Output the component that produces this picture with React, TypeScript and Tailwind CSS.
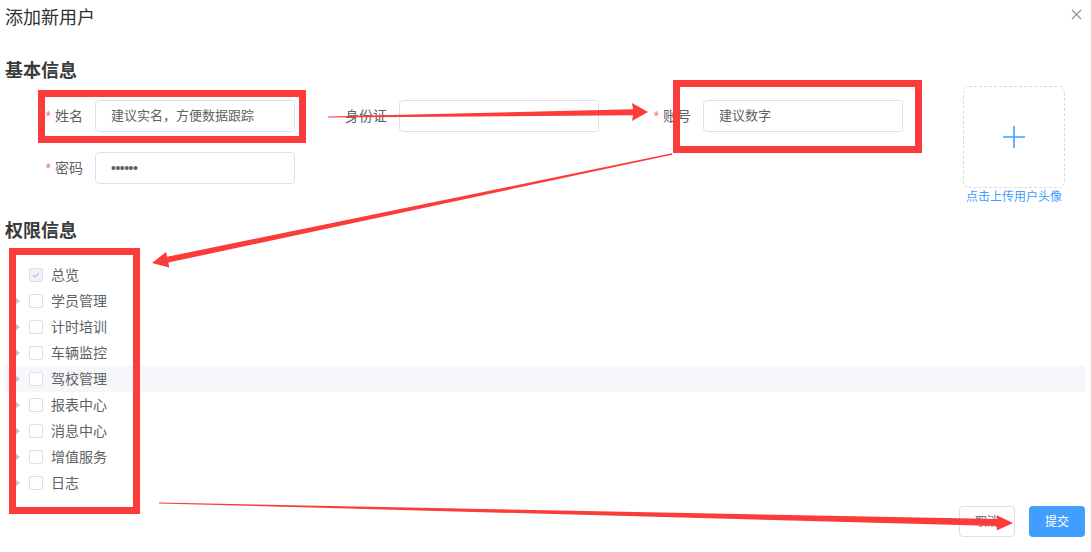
import React from "react";

const tree = [
  { label: "总览", leaf: true, checked: true },
  { label: "学员管理" },
  { label: "计时培训" },
  { label: "车辆监控" },
  { label: "驾校管理", hover: true },
  { label: "报表中心" },
  { label: "消息中心" },
  { label: "增值服务" },
  { label: "日志" },
];

function Field({
  label,
  required,
  value,
  mono,
}: {
  label: string;
  required?: boolean;
  value?: string;
  mono?: boolean;
}) {
  return (
    <div className="flex items-center">
      <label className="w-[90px] pr-3 text-right text-sm leading-8 text-[#606266]">
        {required && <span className="mr-1 text-[#f56c6c]">*</span>}
        {label}
      </label>
      <div
        className={
          "flex h-8 w-[200px] items-center rounded-[4px] border border-[#dcdfe6] px-[15px] text-[#606266] " +
          (mono ? "text-sm tracking-[-0.5px]" : "text-[13px]")
        }
      >
        {value}
      </div>
    </div>
  );
}

function Checkbox({ checked }: { checked?: boolean }) {
  if (checked) {
    return (
      <span className="flex h-[14px] w-[14px] items-center justify-center rounded-[2px] border border-[#dcdfe6] bg-[#edf2fc]">
        <svg width="8" height="6" viewBox="0 0 8 6" fill="none">
          <path d="M1 3l2 2 4-4" stroke="#c0c4cc" strokeWidth="1.2" />
        </svg>
      </span>
    );
  }
  return <span className="h-[14px] w-[14px] rounded-[2px] border border-[#dcdfe6] bg-white" />;
}

function Arrows() {
  return (
    <svg className="pointer-events-none absolute left-0 top-0" width="1091" height="552">
      <g fill="#fc3b3b">
        <polygon points="328,116.6 633,109.3 632,103 648,112 632,121 633,115.3 328,117.4" />
        <polygon points="672,153.3 167.1,256.8 166.1,251.9 152,263 169.3,267.5 168.3,262.6 672,154.7" />
        <polygon points="159,502.6 997.1,519.1 997.2,515.6 1013,523 996.8,530.6 996.9,526.1 159,503.4" />
      </g>
    </svg>
  );
}

export default function App() {
  return (
    <div className="relative h-[552px] w-[1091px] overflow-hidden bg-white pl-[5px] pr-[6px] font-['Liberation_Sans','Noto_Sans_CJK_SC',sans-serif]">
      <div className="flex h-9 items-center justify-between">
        <h1 className="text-lg text-[#303133]">添加新用户</h1>
        <span className="-mt-2 mr-[3px] text-[#909399]">
          <svg width="11" height="11" viewBox="0 0 11 11">
            <path d="M1 1l9 9M10 1l-9 9" stroke="#909399" strokeWidth="1.2" />
          </svg>
        </span>
      </div>

      <h2 className="mt-[23px] text-lg font-bold leading-6 text-[#3a3a3a]">基本信息</h2>

      <div className="mt-[3px] flex">
        <div className="flex flex-col gap-5 pt-[14px]">
          <div className="flex gap-[14px]">
            <Field label="姓名" required value="建议实名，方便数据跟踪" />
            <Field label="身份证" />
            <Field label="账号" required value="建议数字" />
          </div>
          <Field label="密码" required value="••••••" mono />
        </div>
        <div className="ml-auto mr-5 flex flex-col items-center">
          <div className="flex h-[102px] w-[102px] items-center justify-center rounded-md border border-dashed border-[#d9d9d9]">
            <svg width="24" height="24" viewBox="0 0 24 24">
              <path d="M12 1v22M1 12h22" stroke="#409eff" strokeWidth="1.6" />
            </svg>
          </div>
          <span className="mt-[1px] text-xs leading-4 text-[#409eff]">点击上传用户头像</span>
        </div>
      </div>

      <h2 className="mt-[14px] text-lg font-bold leading-6 text-[#3a3a3a]">权限信息</h2>

      <ul className="mt-[19px]">
        {tree.map((n) => (
          <li
            key={n.label}
            className={"flex h-[26px] items-center " + (n.hover ? "bg-[#f5f7fa]" : "")}
          >
            <span className="flex w-6 items-center justify-center">
              {!n.leaf && (
                <span className="h-0 w-0 border-y-[4px] border-l-[5px] border-y-transparent border-l-[#c0c4cc]" />
              )}
            </span>
            <Checkbox checked={n.checked} />
            <span className="ml-2 text-sm text-[#606266]">{n.label}</span>
          </li>
        ))}
      </ul>

      <div className="mt-[10px] flex justify-end gap-[14px]">
        <button className="h-[31px] w-14 rounded-[4px] border border-[#dcdfe6] bg-white text-xs text-[#606266]">
          取消
        </button>
        <button className="h-[31px] w-14 rounded-[4px] bg-[#409eff] text-xs text-white">提交</button>
      </div>

      {/* annotation overlay */}
      <div className="pointer-events-none absolute left-[38px] top-[90px] h-[53px] w-[268px] border-[7px] border-[#fc3b3b]" />
      <div className="pointer-events-none absolute left-[673px] top-[80px] h-[73px] w-[249px] border-[7px] border-[#fc3b3b]" />
      <div className="pointer-events-none absolute left-[9px] top-[248px] h-[266px] w-[131px] border-[7px] border-[#fc3b3b]" />
      <Arrows />
    </div>
  );
}
